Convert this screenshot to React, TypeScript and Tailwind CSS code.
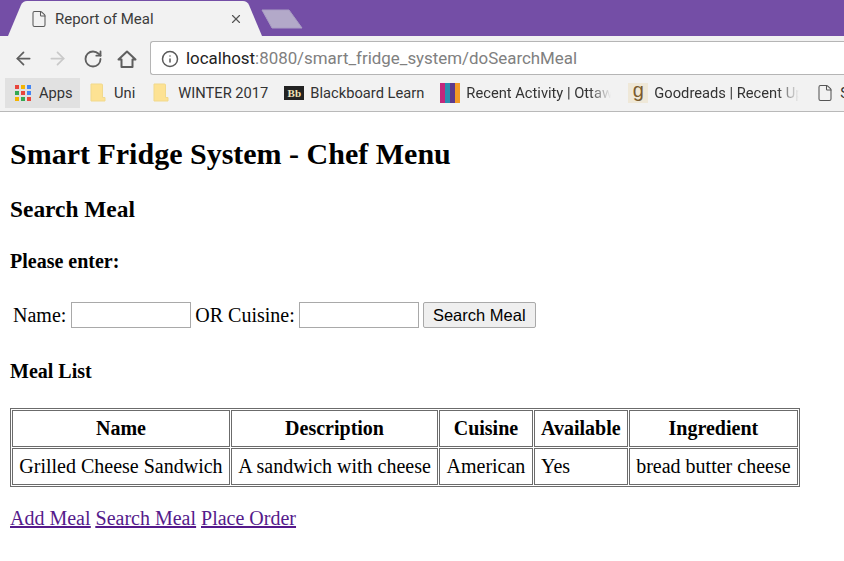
import { ArrowLeft, ArrowRight, RotateCw, Info, X, File } from 'lucide-react';

const APPS_COLORS = ['#e8453c', '#f4b400', '#4285f4', '#34a853', '#e8453c', '#4285f4', '#f4b400', '#34a853', '#e8453c'];

function Folder() {
    return (
        <svg width="16" height="19" viewBox="0 0 16 19" className="shrink-0">
            <path d="M1 1h10.5q1 0 1 1v12.5h2.5v3.5H1z" fill="#fde293" stroke="#f1d98c" />
        </svg>
    );
}

function Bookmark({ icon, label, className, fade }: { icon: React.ReactNode; label: string; className: string; fade?: string }) {
    return (
        <div className={`flex shrink-0 items-center ${className}`}>
            {icon}
            <span className={`whitespace-nowrap ${fade ?? ''}`}>{label}</span>
        </div>
    );
}

function BrowserChrome() {
    return (
        <div className="font-['Open_Sans',sans-serif] text-[#3c3c3c]">
            <div className="relative h-9 overflow-hidden bg-[#744ea6]">
                <svg width="310" height="36" viewBox="0 0 310 36" className="absolute left-0 top-0">
                    <path d="M8 36L21 5Q23 1 27 1H243Q247 1 249 5L262 36Z" fill="#f2f2f2" />
                    <path d="M262 10H289L302 28H272Z" fill="#b3a9c9" stroke="#a99dc3" strokeLinejoin="round" />
                </svg>
                <div className="relative flex h-9 w-[243px] items-center pl-[30px] pt-[2px]">
                    <File size={18} strokeWidth={1.4} className="text-[#5a5a5a]" />
                    <span className="ml-[7px] font-['Roboto',sans-serif] text-[15px]">Report of Meal</span>
                    <X size={14} strokeWidth={2} className="ml-auto text-[#555]" />
                </div>
            </div>
            <div className="flex h-[39px] items-center bg-[#f2f2f2] pt-[4px]">
                <ArrowLeft size={21} strokeWidth={2} className="ml-[13px] mt-[2px] text-[#5f5f5f]" />
                <ArrowRight size={21} strokeWidth={2} className="ml-[13px] mt-[2px] text-[#c9c9c9]" />
                <RotateCw size={20} strokeWidth={2.2} className="ml-[15px] mt-[2px] text-[#5f5f5f]" />
                <svg width="20" height="20" viewBox="0 0 20 20" fill="none" stroke="#5f5f5f" strokeWidth="2" className="ml-[14px] mt-[2px]">
                    <path d="M1.5 10.5L10 2.5L18.5 10.5H15.5V18H4.5V10.5Z" strokeLinejoin="round" />
                </svg>
                <div className="ml-[13px] flex h-[34px] flex-1 items-center rounded-l-[3px] border border-r-0 border-[#b5b5b5] bg-white pl-[10px]">
                    <Info size={18} strokeWidth={2} className="mt-[2px] text-[#5a5a5a]" />
                    <span className="ml-[7px] pt-[3px] font-['Roboto',sans-serif] text-[16.9px] text-[#808080]">
                        <span className="text-[#222]">localhost</span>:8080/smart_fridge_system/doSearchMeal
                    </span>
                </div>
            </div>
            <div className="flex h-[37px] items-center overflow-hidden border-b border-[#b9b9b9] bg-[#f2f2f2] pl-[5px] font-['Roboto',sans-serif] text-[14.7px] text-[#333]">
                <div className="flex h-[30px] w-[75px] shrink-0 items-center bg-[#e1e1e1] pl-[10px]">
                    <div className="grid grid-cols-3 gap-[2px]">
                        {APPS_COLORS.map((c, i) => (
                            <div key={i} className="h-[4px] w-[4px]" style={{ backgroundColor: c }} />
                        ))}
                    </div>
                    <span className="ml-[8px]">Apps</span>
                </div>
                <Bookmark className="ml-[10px] gap-[8px]" icon={<Folder />} label="Uni" />
                <Bookmark className="ml-[18px] gap-[9px]" icon={<Folder />} label="WINTER 2017" />
                <Bookmark
                    className="ml-[16px] gap-[6px]"
                    icon={<div className="flex h-[14px] w-[20px] items-center justify-center bg-[#222] font-['Liberation_Serif',serif] text-[11px] font-bold text-[#f0e4b8]">Bb</div>}
                    label="Blackboard Learn"
                />
                <Bookmark
                    className="ml-[16px] gap-[6px]"
                    fade="w-[145px] overflow-hidden [mask-image:linear-gradient(to_right,black_85%,transparent)]"
                    icon={
                        <div className="flex h-[20px] w-[20px]">
                            <div className="w-1/4 bg-[#c2287c]" />
                            <div className="w-1/4 bg-[#2a8fb0]" />
                            <div className="w-1/4 bg-[#5b3a8e]" />
                            <div className="w-1/4 bg-[#f39a26]" />
                        </div>
                    }
                    label="Recent Activity | Ottawa"
                />
                <Bookmark
                    className="ml-[17px] gap-[6px]"
                    fade="w-[145px] overflow-hidden [mask-image:linear-gradient(to_right,black_85%,transparent)]"
                    icon={<div className="flex h-[20px] w-[20px] items-center justify-center bg-[#efe8d8] pb-[5px] font-['Liberation_Sans',sans-serif] text-[20px] text-[#7a5b2e]">g</div>}
                    label="Goodreads | Recent Updates"
                />
                <Bookmark className="ml-[17px] gap-[6px]" icon={<File size={18} strokeWidth={1.4} className="text-[#555]" />} label="Smart" />
            </div>
        </div>
    );
}

const COLUMNS = ['Name', 'Description', 'Cuisine', 'Available', 'Ingredient'];
const ROW = ['Grilled Cheese Sandwich', 'A sandwich with cheese', 'American', 'Yes', 'bread butter cheese'];

export default function App() {
    return (
        <div className="h-[561px] w-[844px] overflow-hidden bg-white">
            <BrowserChrome />
            <div className="px-[10px] font-['Liberation_Serif',serif] text-[20px] leading-[23px] text-black">
                <h1 className="mt-[25px] text-[30px] font-bold leading-[34px]">Smart Fridge System - Chef Menu</h1>
                <h2 className="mt-[25px] text-[23.4px] font-bold leading-[26px]">Search Meal</h2>
                <h3 className="mt-[28px] text-[20px] font-bold leading-[22px]">Please enter:</h3>
                <div className="ml-[3px] mt-[30px] flex h-[26px] items-center">
                    <span>Name:</span>
                    <input className="ml-[5px] h-[26px] w-[120px] border border-[#a9a9a9] bg-white" />
                    <span className="ml-[4px]">OR Cuisine:</span>
                    <input className="ml-[4px] h-[26px] w-[120px] border border-[#a9a9a9] bg-white" />
                    <button className="ml-[4px] h-[26px] w-[113px] rounded-[2px] border border-[#a9a9a9] bg-[#efefef] font-['Liberation_Sans',sans-serif] text-[16.5px] leading-none">
                        Search Meal
                    </button>
                </div>
                <h3 className="mt-[32px] text-[20px] font-bold leading-[22px]">Meal List</h3>
                <table className="mt-[26px] border-separate border-spacing-[1.25px] border border-[#6b6b6b]">
                    <thead>
                        <tr>
                            {COLUMNS.map(c => (
                                <th key={c} className="h-[37px] border border-[#6b6b6b] px-[6.3px] py-0 text-center font-bold">
                                    {c}
                                </th>
                            ))}
                        </tr>
                    </thead>
                    <tbody>
                        <tr>
                            {ROW.map(c => (
                                <td key={c} className="h-[37px] whitespace-nowrap border border-[#6b6b6b] px-[6.3px] py-0">
                                    {c}
                                </td>
                            ))}
                        </tr>
                    </tbody>
                </table>
                <div className="mt-[20px] flex gap-[5px] text-[#551a8b] underline">
                    <a href="#">Add Meal</a>
                    <a href="#">Search Meal</a>
                    <a href="#">Place Order</a>
                </div>
            </div>
        </div>
    );
}
